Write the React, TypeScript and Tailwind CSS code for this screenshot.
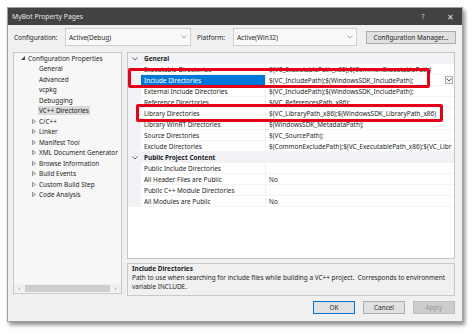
import React from "react";

type TreeItem = { label: string; level: 0 | 1; icon?: "exp" | "col"; selected?: boolean };

const treeItems: TreeItem[] = [
  { label: "Configuration Properties", level: 0, icon: "exp" },
  { label: "General", level: 1 },
  { label: "Advanced", level: 1 },
  { label: "vcpkg", level: 1 },
  { label: "Debugging", level: 1 },
  { label: "VC++ Directories", level: 1, selected: true },
  { label: "C/C++", level: 1, icon: "col" },
  { label: "Linker", level: 1, icon: "col" },
  { label: "Manifest Tool", level: 1, icon: "col" },
  { label: "XML Document Generator", level: 1, icon: "col" },
  { label: "Browse Information", level: 1, icon: "col" },
  { label: "Build Events", level: 1, icon: "col" },
  { label: "Custom Build Step", level: 1, icon: "col" },
  { label: "Code Analysis", level: 1, icon: "col" },
];

type Row =
  | { kind: "cat"; label: string }
  | { kind: "prop"; name: string; value: string; selected?: boolean; dropdown?: boolean };

const rows: Row[] = [
  { kind: "cat", label: "General" },
  { kind: "prop", name: "Executable Directories", value: "$(VC_ExecutablePath_x86);$(CommonExecutablePath)" },
  { kind: "prop", name: "Include Directories", value: "$(VC_IncludePath);$(WindowsSDK_IncludePath);", selected: true, dropdown: true },
  { kind: "prop", name: "External Include Directories", value: "$(VC_IncludePath);$(WindowsSDK_IncludePath);" },
  { kind: "prop", name: "Reference Directories", value: "$(VC_ReferencesPath_x86);" },
  { kind: "prop", name: "Library Directories", value: "$(VC_LibraryPath_x86);$(WindowsSDK_LibraryPath_x86)" },
  { kind: "prop", name: "Library WinRT Directories", value: "$(WindowsSDK_MetadataPath);" },
  { kind: "prop", name: "Source Directories", value: "$(VC_SourcePath);" },
  { kind: "prop", name: "Exclude Directories", value: "$(CommonExcludePath);$(VC_ExecutablePath_x86);$(VC_Libr" },
  { kind: "cat", label: "Public Project Content" },
  { kind: "prop", name: "Public Include Directories", value: "" },
  { kind: "prop", name: "All Header Files are Public", value: "No" },
  { kind: "prop", name: "Public C++ Module Directories", value: "" },
  { kind: "prop", name: "All Modules are Public", value: "No" },
];

function Chevron({ className = "" }: { className?: string }) {
  return (
    <svg width="6" height="4" viewBox="0 0 6 4" className={className}>
      <path d="M0.5 0.5 L3 3 L5.5 0.5" fill="none" stroke="currentColor" strokeWidth="0.9" />
    </svg>
  );
}

function TriExp() {
  return (
    <svg width="4" height="4" viewBox="0 0 4 4">
      <path d="M4 0 L4 4 L0 4 Z" fill="#444" />
    </svg>
  );
}

function TriCol() {
  return (
    <svg width="4" height="5" viewBox="0 0 4 5">
      <path d="M0.5 0.5 L3.5 2.5 L0.5 4.5 Z" fill="none" stroke="#666" strokeWidth="0.7" />
    </svg>
  );
}

function Combo({ text, w }: { text: string; w: string }) {
  return (
    <div className={`${w} h-[18px] bg-[#f9f9f9] border border-[#d0d0d0] flex items-center pl-[3px] pr-[3px]`}>
      <span className="flex-1 text-[#1e1e1e]">{text}</span>
      <Chevron className="text-[#9a9a9a]" />
    </div>
  );
}

export default function App() {
  return (
    <div className="relative w-[474px] h-[333px] bg-white overflow-hidden font-['Noto_Sans',sans-serif] text-[6.45px] leading-[9px] text-[#1e1e1e]">
      <div className="pt-[7px] pl-[7px]">
        <div className="w-[456px] h-[315px] bg-[#f0f0f0] border border-[#a0a0a0] shadow-[2px_3px_4px_rgba(0,0,0,0.45)] flex flex-col">
          {/* Title bar */}
          <div className="h-[17px] bg-[#424242] flex items-center pl-[4px] text-[#e8e8e8] text-[6.8px]">
            <span>MyBot Property Pages</span>
            <span className="ml-auto w-[10px] text-center text-[#d0d0d0]">?</span>
            <span className="ml-[17px] mr-[7px] w-[10px] text-center text-[#e0e0e0] text-[8px]">✕</span>
          </div>

          {/* Configuration row */}
          <div className="mt-[3px] h-[18px] flex items-center pl-[6px]">
            <span className="w-[51px]">Configuration:</span>
            <Combo text="Active(Debug)" w="w-[126px]" />
            <span className="ml-[6px] w-[36px]">Platform:</span>
            <Combo text="Active(Win32)" w="w-[124px]" />
            <div className="ml-[9px] w-[90px] h-[13px] bg-[#e1e1e1] border border-[#adadad] flex items-center justify-center">
              Configuration Manager...
            </div>
          </div>

          {/* Main area */}
          <div className="mt-[6px] flex pl-[5px]">
            {/* Tree */}
            <div className="w-[109px] h-[242px] bg-[#f7f7f7] border border-[#c8c8c8] flex flex-col">
              <div className="flex-1">
                {treeItems.map((t) => (
                  <div key={t.label} className="h-[10.5px] flex items-center whitespace-nowrap">
                    {t.level === 0 ? (
                      <>
                        <span className="w-[7px] ml-[7px] flex items-center">
                          <TriExp />
                        </span>
                        <span>{t.label}</span>
                      </>
                    ) : (
                      <>
                        <span className="w-[7px] ml-[18px] flex items-center">{t.icon === "col" ? <TriCol /> : null}</span>
                        <span className={t.selected ? "bg-[#dadada] px-[1px] -ml-[1px]" : ""}>{t.label}</span>
                      </>
                    )}
                  </div>
                ))}
              </div>
              {/* Horizontal scrollbar */}
              <div className="h-[8px] mb-[1px] flex items-center bg-[#f0f0f0] text-[#606060]">
                <span className="w-[11px] text-center text-[6px] leading-[8px]">‹</span>
                <div className="w-[85px] h-[7px] bg-[#cdcdcd]" />
                <span className="w-[11px] text-center text-[6px] leading-[8px]">›</span>
              </div>
            </div>

            {/* Right column */}
            <div className="ml-[5px] w-[328px] flex flex-col">
              {/* Property grid */}
              <div className="h-[207px] bg-white border border-[#c8c8c8] flex">
                <div className="flex-1 flex flex-col overflow-hidden">
                  {rows.map((r, i) =>
                    r.kind === "cat" ? (
                      <div key={i} className="h-[11px] flex items-center bg-[#f0f2f5]">
                        <span className="w-[13px] flex items-center justify-center text-[#555]">
                          <Chevron />
                        </span>
                        <span className="pl-[3px] font-bold">{r.label}</span>
                      </div>
                    ) : (
                      <div key={i} className="h-[11px] flex items-stretch border-b border-[#f4f4f4]">
                        <span className="w-[13px] bg-[#f0f2f5]" />
                        <span
                          className={`w-[124px] pl-[3px] flex items-center whitespace-nowrap overflow-hidden ${
                            r.selected ? "bg-[#0078d7] text-white" : ""
                          }`}
                        >
                          {r.name}
                        </span>
                        <span className="flex-1 pl-[3px] flex items-center whitespace-nowrap overflow-hidden border-l border-[#f0f0f0]">
                          {r.value}
                        </span>
                        {r.dropdown ? (
                          <span className="w-[8px] h-[8px] self-center mr-[1px] bg-[#f0f0f0] border border-[#b0b0b0] flex items-center justify-center text-[#555]">
                            <Chevron />
                          </span>
                        ) : null}
                      </div>
                    )
                  )}
                </div>
              </div>

              {/* Description */}
              <div className="mt-[4px] h-[33px] bg-[#f0f0f0] border border-[#c8c8c8] pl-[4px] whitespace-nowrap">
                <div className="font-bold">Include Directories</div>
                <div>
                  Path to use when searching for include files while building a VC++ project.&nbsp; Corresponds to environment
                </div>
                <div>variable INCLUDE.</div>
              </div>
            </div>
          </div>

          {/* Buttons */}
          <div className="mt-[5px] flex justify-end pr-[7px] gap-[8px]">
            <div className="w-[42px] h-[13px] bg-[#e1e1e1] border border-[#0078d7] flex items-center justify-center">OK</div>
            <div className="w-[42px] h-[13px] bg-[#e1e1e1] border border-[#adadad] flex items-center justify-center">Cancel</div>
            <div className="w-[42px] h-[13px] bg-[#cccccc] border border-[#bfbfbf] flex items-center justify-center text-[#9a9a9a]">Apply</div>
          </div>
        </div>
      </div>

      {/* Red annotation boxes */}
      <div className="absolute left-[128px] top-[68px] w-[302px] h-[20px] border-[3px] border-[#e5001a] rounded-[2px]" />
      <div className="absolute left-[136px] top-[104px] w-[307px] h-[18px] border-[3px] border-[#e5001a] rounded-[2px]" />
    </div>
  );
}
